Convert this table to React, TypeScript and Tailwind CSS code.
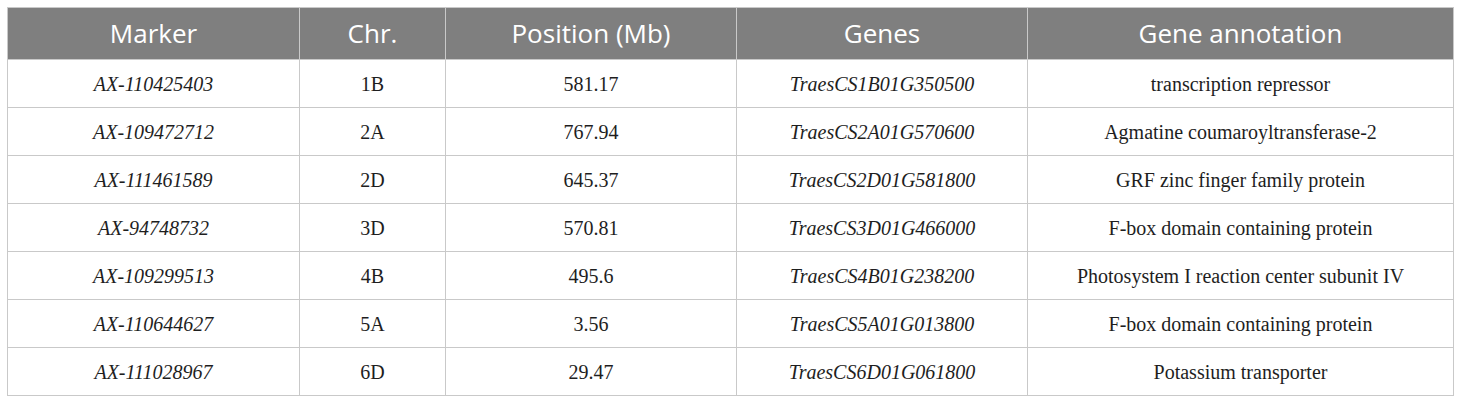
import React from "react";

const rows = [
    ["AX-110425403", "1B", "581.17", "TraesCS1B01G350500", "transcription repressor"],
    ["AX-109472712", "2A", "767.94", "TraesCS2A01G570600", "Agmatine coumaroyltransferase-2"],
    ["AX-111461589", "2D", "645.37", "TraesCS2D01G581800", "GRF zinc finger family protein"],
    ["AX-94748732", "3D", "570.81", "TraesCS3D01G466000", "F-box domain containing protein"],
    ["AX-109299513", "4B", "495.6", "TraesCS4B01G238200", "Photosystem I reaction center subunit IV"],
    ["AX-110644627", "5A", "3.56", "TraesCS5A01G013800", "F-box domain containing protein"],
    ["AX-111028967", "6D", "29.47", "TraesCS6D01G061800", "Potassium transporter"],
];

const headers = ["Marker", "Chr.", "Position (Mb)", "Genes", "Gene annotation"];

const App: React.FC = () => {
    return (
        <div className="w-[1460px] h-[405px] bg-white pt-[7px] pl-[7px]">
            <table className="w-[1446px] table-fixed border-collapse">
                <colgroup>
                    <col className="w-[292px]" />
                    <col className="w-[146px]" />
                    <col className="w-[291px]" />
                    <col className="w-[291px]" />
                    <col className="w-[426px]" />
                </colgroup>
                <thead>
                    <tr className="h-[52px] bg-[#7f7f7f]">
                        {headers.map(h => (
                            <th
                                key={h}
                                className="border border-[#c9c9c9] text-center align-middle font-normal text-white text-[26px] leading-none font-['Open_Sans',sans-serif] pb-[2px]"
                            >
                                {h}
                            </th>
                        ))}
                    </tr>
                </thead>
                <tbody>
                    {rows.map(r => (
                        <tr key={r[0]} className="h-[48px] text-[20px] leading-none text-[#1e1e1e] font-['Liberation_Serif',serif]">
                            <td className="border border-[#c9c9c9] text-center italic">{r[0]}</td>
                            <td className="border border-[#c9c9c9] text-center">{r[1]}</td>
                            <td className="border border-[#c9c9c9] text-center">{r[2]}</td>
                            <td className="border border-[#c9c9c9] text-center italic">{r[3]}</td>
                            <td className="border border-[#c9c9c9] text-center">{r[4]}</td>
                        </tr>
                    ))}
                </tbody>
            </table>
        </div>
    );
};

export default App;
